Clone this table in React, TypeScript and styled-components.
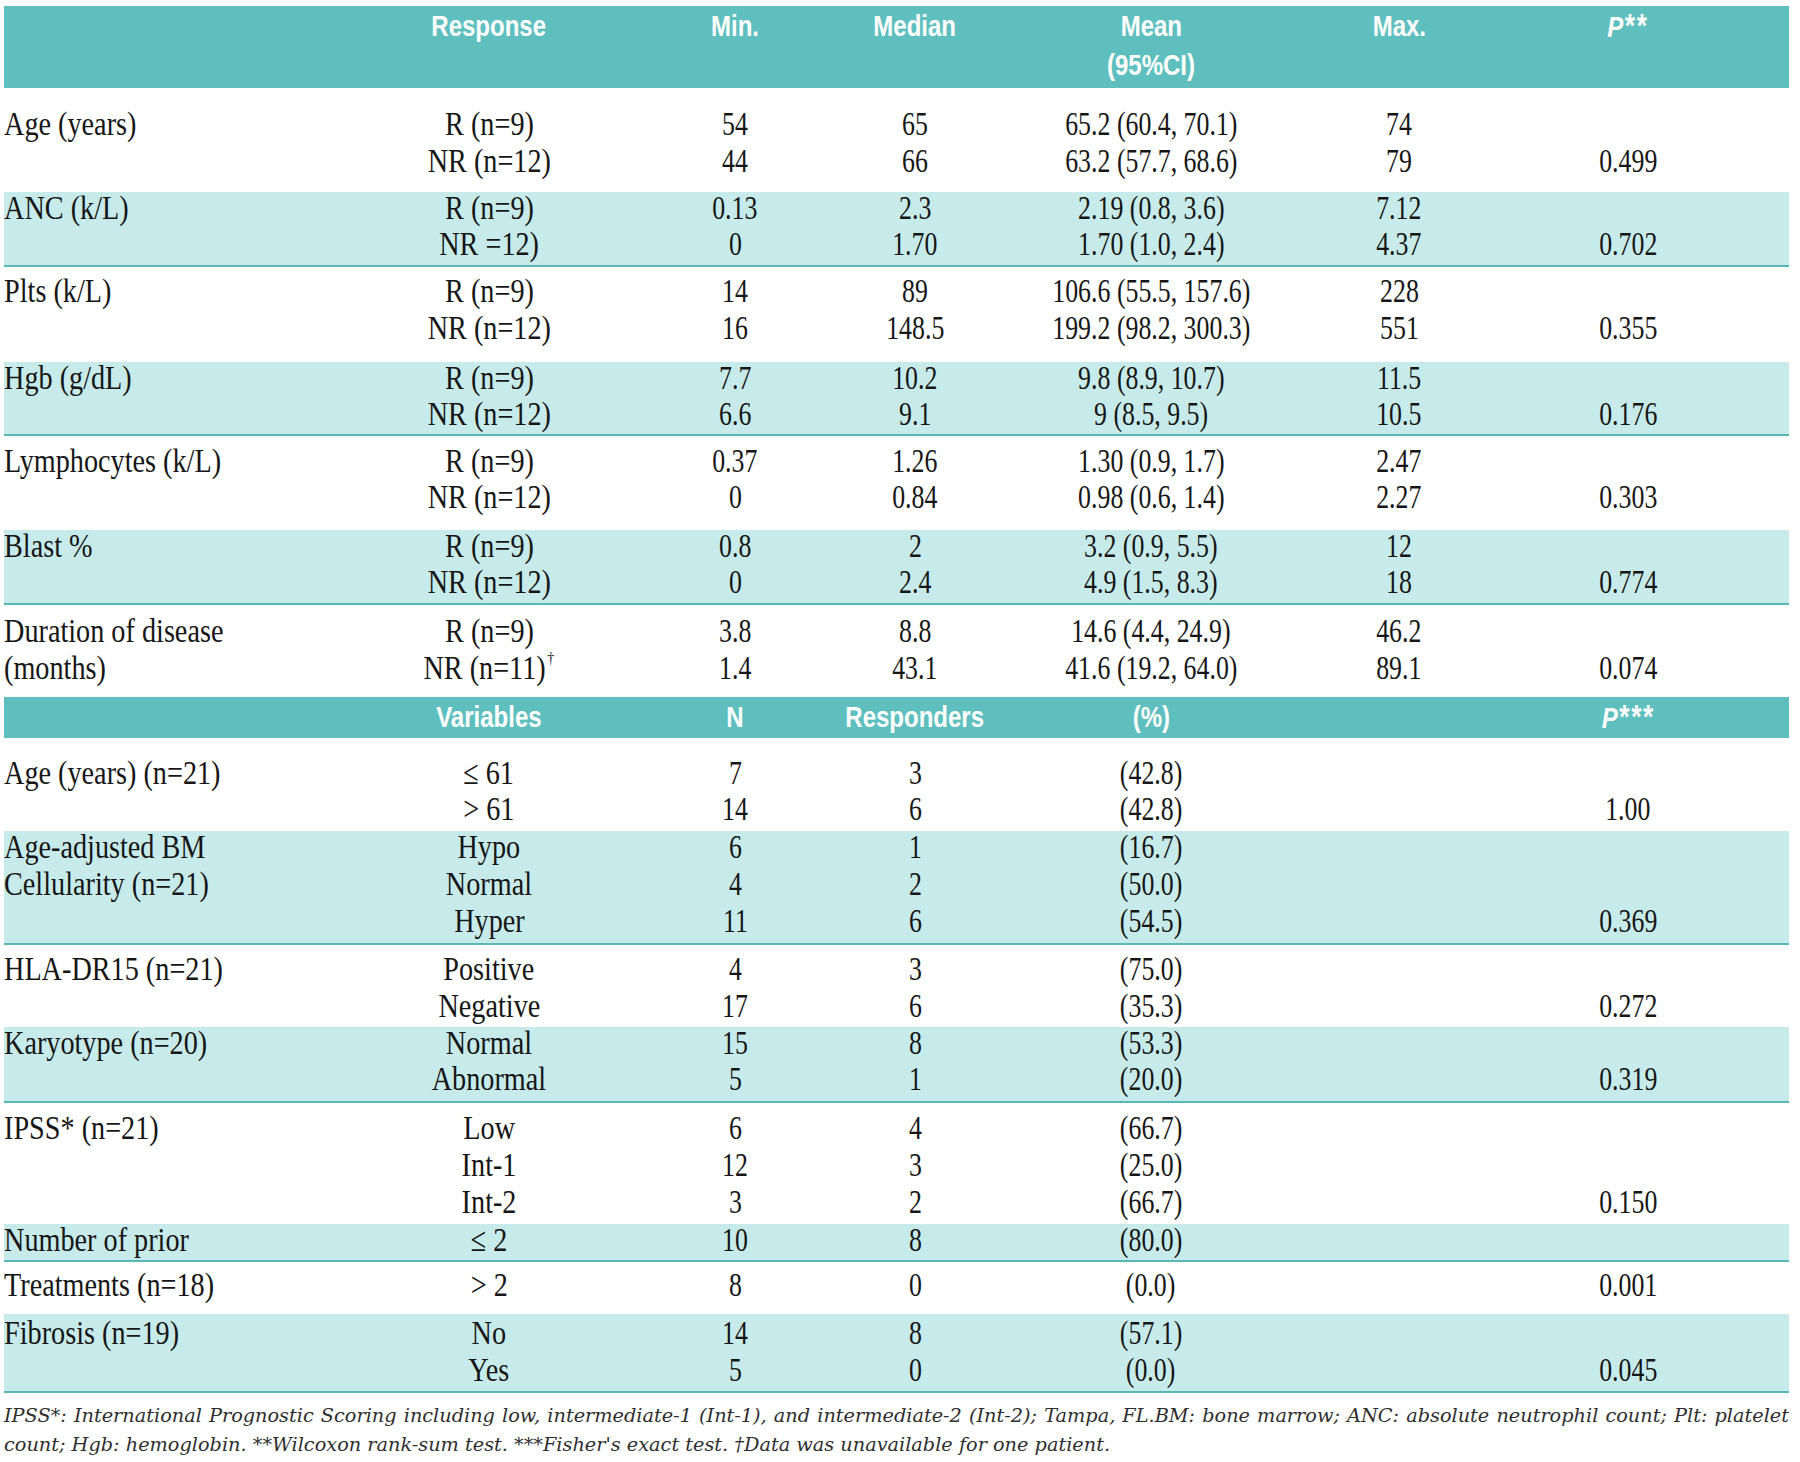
import React from 'react';
import styled, { createGlobalStyle } from 'styled-components';

const Global = createGlobalStyle`
  html, body { margin: 0; padding: 0; background: #ffffff; }
  body { font-family: "Liberation Serif", "Times New Roman", serif; color: #161616; }
`;

const COLS = '356px 258px 234px 126px 346px 150px 308px 1fr';

const Page = styled.div`
  width: 1785px;
  padding: 6px 0 0 4px;
`;

const HeadBand = styled.div<{ $pt: number; $pb: number }>`
  background: #5fbfbf;
  display: grid;
  grid-template-columns: ${COLS};
  align-items: start;
  padding: ${(p) => p.$pt}px 0 ${(p) => p.$pb}px;
`;

const HeadCell = styled.div`
  display: flex;
  flex-direction: column;
  align-items: center;
  white-space: nowrap;
  font-family: "Liberation Sans", Arial, sans-serif;
  font-weight: 700;
  font-size: 30px;
  line-height: 39px;
  color: #ffffff;
`;

const HeadText = styled.span`
  display: inline-block;
  transform: scaleX(0.8);
`;

const Stars = styled.span`
  font-style: normal;
  font-size: 1.1em;
  letter-spacing: 2px;
  margin-left: 2px;
`;

const Group = styled.div<{ $teal: boolean; $pt: number; $pb: number }>`
  background: ${(p) => (p.$teal ? '#c7ebeb' : '#ffffff')};
  padding: ${(p) => p.$pt}px 0 ${(p) => p.$pb}px;
  border-bottom: ${(p) => (p.$teal ? '2px solid #5ab7b7' : 'none')};
`;

const Line = styled.div<{ $lh: number }>`
  display: grid;
  grid-template-columns: ${COLS};
  height: ${(p) => p.$lh}px;
  align-items: start;
`;

const Cell = styled.div<{ $left?: boolean }>`
  display: flex;
  justify-content: ${(p) => (p.$left ? 'flex-start' : 'center')};
  white-space: nowrap;
  font-size: 34px;
  line-height: 32px;
`;

const Txt = styled.span<{ $left?: boolean; $num?: boolean }>`
  display: inline-block;
  transform: scaleX(${(p) => (p.$num ? 0.76 : 0.83)});
  transform-origin: ${(p) => (p.$left ? 'left center' : 'center center')};
`;

const Dagger = styled.span`
  display: inline-block;
  font-size: 0.5em;
  line-height: 1;
  transform: translateY(-0.9em);
  margin-left: 2px;
`;

const Notes = styled.div`
  padding-top: 8px;
  font-family: "DejaVu Serif", "Liberation Serif", serif;
  font-style: italic;
  font-size: 19.3px;
  line-height: 29px;
  color: #2e2e2e;
`;

const NoteFull = styled.div`
  text-align: justify;
  text-align-last: justify;
`;

const NoteLine = styled.div``;

type GroupData = {
  teal: boolean;
  pt: number;
  pb: number;
  lh: number;
  labels: string[];
  lines: React.ReactNode[][];
};

const section1: GroupData[] = [
  {
    teal: false, pt: 20, pb: 10, lh: 37, labels: ['Age (years)'],
    lines: [
      ['R (n=9)', '54', '65', '65.2 (60.4, 70.1)', '74', ''],
      ['NR (n=12)', '44', '66', '63.2 (57.7, 68.6)', '79', '0.499'],
    ],
  },
  {
    teal: true, pt: 0, pb: 1, lh: 36, labels: ['ANC (k/L)'],
    lines: [
      ['R (n=9)', '0.13', '2.3', '2.19 (0.8, 3.6)', '7.12', ''],
      ['NR =12)', '0', '1.70', '1.70 (1.0, 2.4)', '4.37', '0.702'],
    ],
  },
  {
    teal: false, pt: 8, pb: 13, lh: 37, labels: ['Plts (k/L)'],
    lines: [
      ['R (n=9)', '14', '89', '106.6 (55.5, 157.6)', '228', ''],
      ['NR (n=12)', '16', '148.5', '199.2 (98.2, 300.3)', '551', '0.355'],
    ],
  },
  {
    teal: true, pt: 0, pb: 0, lh: 36, labels: ['Hgb (g/dL)'],
    lines: [
      ['R (n=9)', '7.7', '10.2', '9.8 (8.9, 10.7)', '11.5', ''],
      ['NR (n=12)', '6.6', '9.1', '9 (8.5, 9.5)', '10.5', '0.176'],
    ],
  },
  {
    teal: false, pt: 9, pb: 13, lh: 36, labels: ['Lymphocytes (k/L)'],
    lines: [
      ['R (n=9)', '0.37', '1.26', '1.30 (0.9, 1.7)', '2.47', ''],
      ['NR (n=12)', '0', '0.84', '0.98 (0.6, 1.4)', '2.27', '0.303'],
    ],
  },
  {
    teal: true, pt: 0, pb: 1, lh: 36, labels: ['Blast %'],
    lines: [
      ['R (n=9)', '0.8', '2', '3.2 (0.9, 5.5)', '12', ''],
      ['NR (n=12)', '0', '2.4', '4.9 (1.5, 8.3)', '18', '0.774'],
    ],
  },
  {
    teal: false, pt: 10, pb: 8, lh: 37, labels: ['Duration of disease', '(months)'],
    lines: [
      ['R (n=9)', '3.8', '8.8', '14.6 (4.4, 24.9)', '46.2', ''],
      [<>NR (n=11)<Dagger>†</Dagger></>, '1.4', '43.1', '41.6 (19.2, 64.0)', '89.1', '0.074'],
    ],
  },
];

const section2: GroupData[] = [
  {
    teal: false, pt: 19, pb: 2, lh: 36, labels: ['Age (years) (n=21)'],
    lines: [
      ['≤ 61', '7', '3', '(42.8)', '', ''],
      ['> 61', '14', '6', '(42.8)', '', '1.00'],
    ],
  },
  {
    teal: true, pt: 0, pb: 1, lh: 37, labels: ['Age-adjusted BM', 'Cellularity (n=21)'],
    lines: [
      ['Hypo', '6', '1', '(16.7)', '', ''],
      ['Normal', '4', '2', '(50.0)', '', ''],
      ['Hyper', '11', '6', '(54.5)', '', '0.369'],
    ],
  },
  {
    teal: false, pt: 8, pb: 0, lh: 37, labels: ['HLA-DR15 (n=21)'],
    lines: [
      ['Positive', '4', '3', '(75.0)', '', ''],
      ['Negative', '17', '6', '(35.3)', '', '0.272'],
    ],
  },
  {
    teal: true, pt: 0, pb: 2, lh: 36, labels: ['Karyotype (n=20)'],
    lines: [
      ['Normal', '15', '8', '(53.3)', '', ''],
      ['Abnormal', '5', '1', '(20.0)', '', '0.319'],
    ],
  },
  {
    teal: false, pt: 9, pb: 1, lh: 37, labels: ['IPSS* (n=21)'],
    lines: [
      ['Low', '6', '4', '(66.7)', '', ''],
      ['Int-1', '12', '3', '(25.0)', '', ''],
      ['Int-2', '3', '2', '(66.7)', '', '0.150'],
    ],
  },
  {
    teal: true, pt: 0, pb: 0, lh: 36, labels: ['Number of prior'],
    lines: [['≤ 2', '10', '8', '(80.0)', '', '']],
  },
  {
    teal: false, pt: 7, pb: 9, lh: 36, labels: ['Treatments (n=18)'],
    lines: [['> 2', '8', '0', '(0.0)', '', '0.001']],
  },
  {
    teal: true, pt: 3, pb: 0, lh: 37, labels: ['Fibrosis (n=19)'],
    lines: [
      ['No', '14', '8', '(57.1)', '', ''],
      ['Yes', '5', '0', '(0.0)', '', '0.045'],
    ],
  },
];

function Header({ cols, pt, pb }: { cols: React.ReactNode[][]; pt: number; pb: number }) {
  return (
    <HeadBand $pt={pt} $pb={pb}>
      {cols.map((lines, i) => (
        <HeadCell key={i}>
          {lines.map((l, j) => (
            <HeadText key={j}>{l}</HeadText>
          ))}
        </HeadCell>
      ))}
    </HeadBand>
  );
}

function DataGroup({ g }: { g: GroupData }) {
  return (
    <Group $teal={g.teal} $pt={g.pt} $pb={g.pb}>
      {g.lines.map((cells, i) => (
        <Line key={i} $lh={g.lh}>
          <Cell $left>
            <Txt $left>{g.labels[i] ?? ''}</Txt>
          </Cell>
          {cells.map((c, j) => (
            <Cell key={j}>
              <Txt $num={j > 0}>{c}</Txt>
            </Cell>
          ))}
          <Cell />
        </Line>
      ))}
    </Group>
  );
}

export default function App() {
  return (
    <Page>
      <Global />
      <Header
        pt={0}
        pb={4}
        cols={[
          [],
          ['Response'],
          ['Min.'],
          ['Median'],
          ['Mean', '(95%CI)'],
          ['Max.'],
          [<><i>P</i><Stars>**</Stars></>],
          [],
        ]}
      />
      {section1.map((g, i) => (
        <DataGroup key={i} g={g} />
      ))}
      <Header
        pt={0}
        pb={1}
        cols={[
          [],
          ['Variables'],
          ['N'],
          ['Responders'],
          ['(%)'],
          [],
          [<><i>P</i><Stars>***</Stars></>],
          [],
        ]}
      />
      {section2.map((g, i) => (
        <DataGroup key={i} g={g} />
      ))}
      <Notes>
        <NoteFull>
          IPSS*: International Prognostic Scoring including low, intermediate-1 (Int-1), and intermediate-2 (Int-2); Tampa, FL.BM: bone marrow; ANC: absolute neutrophil count; Plt: platelet
        </NoteFull>
        <NoteLine>
          count; Hgb: hemoglobin. **Wilcoxon rank-sum test. ***Fisher's exact test. †Data was unavailable for one patient.
        </NoteLine>
      </Notes>
    </Page>
  );
}
